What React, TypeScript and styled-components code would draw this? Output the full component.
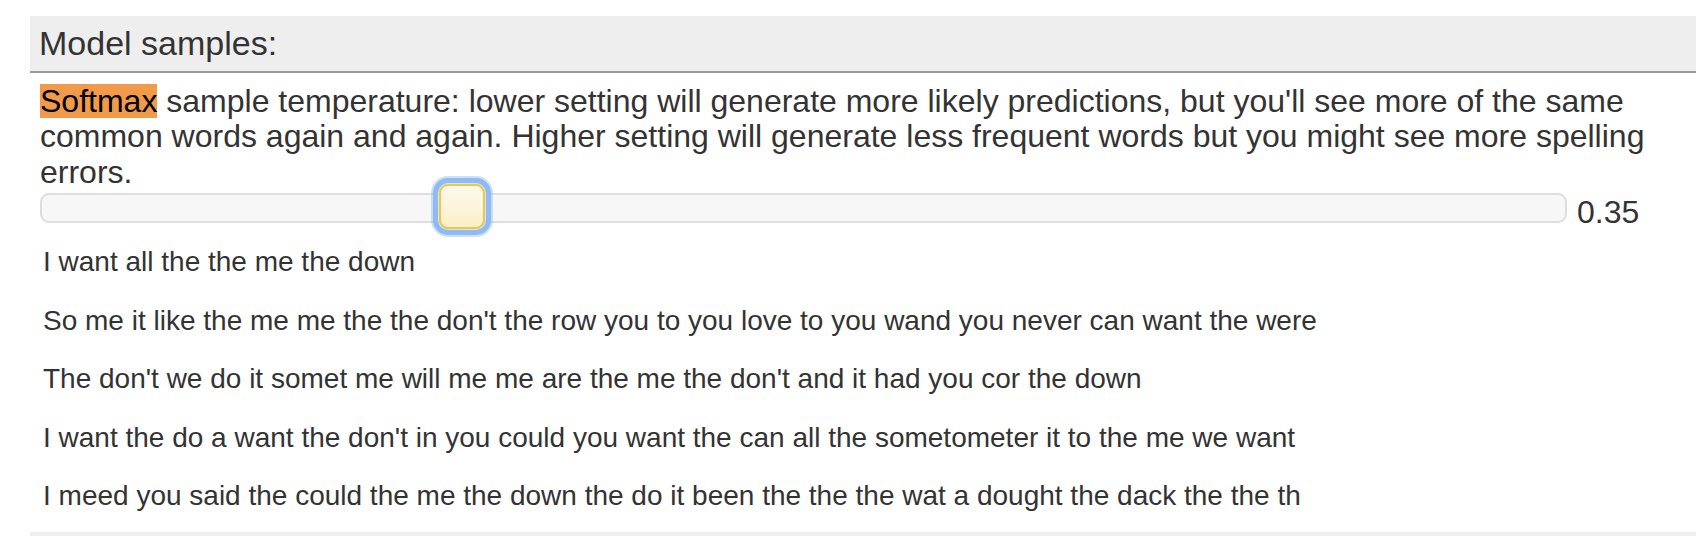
import React from "react";
import styled, { createGlobalStyle } from "styled-components";

const GlobalStyle = createGlobalStyle`
  html, body {
    margin: 0;
    padding: 0;
    background: #ffffff;
    overflow: hidden;
  }
  body {
    font-family: "Liberation Sans", Arial, Helvetica, sans-serif;
    color: #333333;
  }
`;

const Page = styled.div`
  padding: 16px 0 0 30px;
  width: 1666px;
`;

const Panel = styled.section`
  display: flex;
  flex-direction: column;
`;

const PanelHeader = styled.div`
  height: 55px;
  display: flex;
  align-items: center;
  padding: 0 9px;
  background: #eeeeee;
  border-bottom: 2px solid #999999;
  font-size: 34px;
  color: #333333;
`;

const PanelBody = styled.div`
  padding: 0 10px 19px 10px;
  display: flex;
  flex-direction: column;
`;

const Description = styled.p`
  margin: 10.6px 0 0 0;
  font-size: 32px;
  line-height: 35.5px;
  color: #333333;
`;

const Highlight = styled.span`
  display: inline-block;
  line-height: 34px;
  background: #f19a49;
  color: #000000;
`;

const SliderRow = styled.div`
  margin-top: 2.9px;
  display: flex;
  align-items: flex-start;
`;

const Track = styled.div`
  position: relative;
  flex: 1;
  height: 30px;
  box-sizing: border-box;
  background: #f7f7f7;
  border: 2px solid #dddddd;
  border-radius: 9px;
`;

const Thumb = styled.div`
  position: absolute;
  top: -11px;
  width: 46px;
  height: 45px;
  box-sizing: border-box;
  border: 2px solid #f3c544;
  border-radius: 9px;
  background: linear-gradient(to bottom, #fdf9ea 0%, #fcf5dc 50%, #fbefc4 100%);
  box-shadow: 0 0 0 1px #d6e5fa, 0 0 0 6px #8fbaf2, 0 0 0 8px rgba(143, 186, 242, 0.45);
`;

const Value = styled.div`
  flex: 0 0 119px;
  box-sizing: border-box;
  padding: 2px 0 0 10px;
  font-size: 32px;
  line-height: 35.5px;
  color: #333333;
`;

const Samples = styled.div`
  margin-top: 16px;
  padding-left: 3px;
  display: flex;
  flex-direction: column;
  gap: 26px;
`;

const Sample = styled.p`
  margin: 0;
  font-size: 28px;
  line-height: 32.5px;
  color: #333333;
  white-space: nowrap;
`;

const NextPanelHeader = styled.div`
  height: 5px;
  background: #eeeeee;
`;

const samples = [
  "I want all the the me the down",
  "So me it like the me me the the don't the row you to you love to you wand you never can want the were",
  "The don't we do it somet me will me me are the me the don't and it had you cor the down",
  "I want the do a want the don't in you could you want the can all the sometometer it to the me we want",
  "I meed you said the could the me the down the do it been the the the wat a dought the dack the the th",
];

const MIN = 0;
const MAX = 1.3;
const temperature = 0.35;

export default function App() {
  const ratio = (temperature - MIN) / (MAX - MIN);
  return (
    <>
      <GlobalStyle />
      <Page>
        <Panel>
          <PanelHeader>Model samples:</PanelHeader>
          <PanelBody>
            <Description>
              <Highlight>Softmax</Highlight> sample temperature: lower setting will generate more likely
              predictions, but you'll see more of the same common words again and again. Higher setting
              will generate less frequent words but you might see more spelling errors.
            </Description>
            <SliderRow>
              <Track>
                <Thumb style={{ left: `calc((100% - 42px) * ${ratio} - 2px)` }} />
              </Track>
              <Value>{temperature.toFixed(2)}</Value>
            </SliderRow>
            <Samples>
              {samples.map((s, i) => (
                <Sample key={i}>{s}</Sample>
              ))}
            </Samples>
          </PanelBody>
        </Panel>
        <NextPanelHeader />
      </Page>
    </>
  );
}
